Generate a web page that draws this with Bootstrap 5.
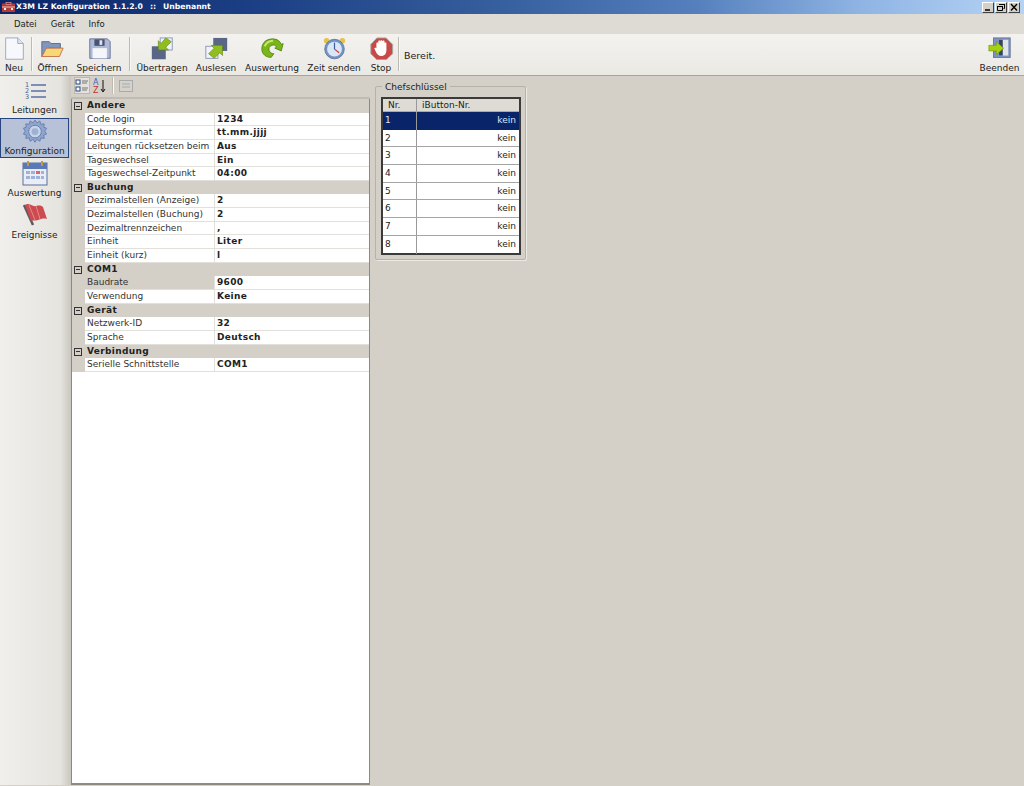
<!DOCTYPE html>
<html lang="de"><head><meta charset="utf-8"><title>X3M LZ Konfiguration</title>
<link href="https://cdn.jsdelivr.net/npm/bootstrap@5.3.0/dist/css/bootstrap.min.css" rel="stylesheet">
<style>
html,body{height:100%;overflow:hidden}
body{width:1024px;height:786px;background:#d4d0c8;font:9px/1.2 "DejaVu Sans",sans-serif;color:#222}
.titlebar{height:14px;flex:none;background:linear-gradient(90deg,#0b2566 0,#1c3f85 25%,#38619f 50%,#5580bd 68%,#8fb4e4 84%,#b6d3f4 100%);color:#fff;font-weight:700;font-size:7.700px;padding-left:2px;gap:1px}
.ttl-sep{margin:0 7px}
.winbtn{width:12px;height:11px;background:#d4d0c8;border:1px solid;border-color:#fff #404040 #404040 #fff;margin-left:1px;color:#000}
.winbtn svg{display:block}
.menubar{height:20px;flex:none;background:#dedbd4;gap:14px;padding:1px 0 0 14px;font-size:8.500px}
.tbar{height:42px;flex:none;background:linear-gradient(180deg,#f3f2ef,#ebe9e4);border-bottom:1px solid #a8a59e;padding:3px 4px 2px 0}
.tool{height:37px;text-align:center;white-space:nowrap}
.tool svg{display:block;width:25px;height:25px;margin-bottom:3px}
.vsep{width:1px;height:34px;background:#bdbab3;border-right:1px solid #f8f8f6;box-sizing:content-box}
.t-neu{width:28px}.s-a{margin:0 4px 0 3px}.t-oeff{width:31px}.t-spei{width:46px;margin-left:8px}
.s-b{margin:0 5px 0 7px}.t-ueb{width:52px}.t-aus{width:44px;margin-left:6px}.t-ausw{width:54px;margin-left:7px}
.t-zeit{width:54px;margin-left:8px}.t-stop{width:26px;margin-left:7px}.s-c{margin:0 4px 0 4px}
.t-ber{font-size:9.500px;margin-bottom:9px}.t-end{width:41px}
.side{width:71px;background:linear-gradient(90deg,#f0efec,#e6e4df 85%,#c9c6bf);flex:none;padding-top:1px}
.sitem{height:41.500px;text-align:center;border:1px solid transparent;margin:0 2px 0 0;white-space:nowrap}
.sitem svg{display:block;width:26px;height:26px;margin-bottom:2px}
.sitem.first{height:41px}
.sitem.first svg{margin-bottom:1px}
.sitem.on{background:#b7c2d9;border-color:#27447f;height:40px;margin:0 2px 1px 0}
.sitem.third{height:42px}
.body-row{flex:1;min-height:0;padding-bottom:1px}
.propwrap{width:299px;flex:none}
.ptool{height:23px;flex:none;padding:1px 0 0 3px;gap:2px;border-bottom:2px solid #c0bcb4}
.ptbtn{width:16px;height:17px}
.ptbtn.on{background:#e4e2dc;border:1px solid #bcb9b1}
.s-p{height:17px;margin:0 2px 0 2px}
.grid{flex:1;background:#fff;border:1px solid #8d8a84;border-top:0;border-bottom-width:2px}
.hrow,.prow{height:13.650px;line-height:13px;display:flex}
.hrow{background:#d4d0c8;font-weight:700;letter-spacing:.35px}
.tog{width:15px;flex:none;padding:3px 0 0 2px}
.tog i{display:block;width:8px;height:8px;border:1px solid #333;background:linear-gradient(#333,#333) center/4px 1px no-repeat}
.gut{width:13px;flex:none;background:#d4d0c8}
.nm{width:130px;flex:none;padding-left:2px;border-bottom:1px solid #e2e0da;border-right:1px solid #e2e0da;white-space:nowrap;overflow:hidden;color:#333}
.vl{flex:1;padding-left:2px;font-weight:700;letter-spacing:.35px;border-bottom:1px solid #e2e0da}
.nm.sel{background:#d4d0c8}
.right{flex:1;padding:10px 0 0 5px}
.gbox{width:151px;height:174px;border:1px solid #b5b2ab;border-radius:2px;position:relative;padding:10px 4px 0 5px;box-shadow:1px 1px 0 #eceae5}
.gbox>span{position:absolute;left:6px;top:-5px;background:#d4d0c8;padding:0 3px;font-size:9px}
.ktab{border:2px solid #3a3a3a;background:#fff;width:140px;height:158px}
.khead{height:13px;background:#dedbd4;display:flex;line-height:13px;border-bottom:1px solid #aaa}
.kc1{width:34px;flex:none;padding-left:5px;border-right:1px solid #999}
.kc2{flex:1;padding-left:5px}
.krow{height:17.700px;display:flex;line-height:17px;border-bottom:1px solid #a5a5a5}
.krow:last-child{border-bottom:0}
.krow .kc1{padding-left:2px}
.krow .kc2{text-align:right;padding-right:3px}
.krow.cur{background:#0a246a;color:#dfe6f5;border-bottom:0}
</style></head><body class="d-flex flex-column">
<div class="titlebar d-flex align-items-center">
<svg width="13" height="10" viewBox="0 0 13 10"><rect y="1.500" width="13" height="8.500" fill="#b23a3a"/><rect x="4" y=".5" width="5" height="2" fill="none" stroke="#d88" stroke-width=".8"/><path d="M0 5h13" stroke="#f3c0b0"/><rect x="2" y="6" width="2" height="2" fill="#eee"/><rect x="9" y="6" width="2" height="2" fill="#eee"/></svg>
<span>X3M LZ Konfiguration 1.1.2.0<span class="ttl-sep">::</span>Unbenannt</span>
<div class="ms-auto d-flex pe-1">
<div class="winbtn"><svg viewBox="0 0 10 9" width="10" height="9"><path d="M2 7h5" stroke="#000" stroke-width="1.500"/></svg></div>
<div class="winbtn"><svg viewBox="0 0 10 9" width="10" height="9"><path d="M3.500 1.500h5v4h-1M1.500 3.500h5v4h-5z" fill="none" stroke="#000"/><path d="M3 1.500h6M1 3.500h6" stroke="#000"/></svg></div>
<div class="winbtn"><svg viewBox="0 0 10 9" width="10" height="9"><path d="M2 1l6 6.500M8 1L2 7.500" stroke="#000" stroke-width="1.400"/></svg></div>
</div></div>
<div class="menubar d-flex align-items-center"><span>Datei</span><span>Gerät</span><span>Info</span></div>
<div class="tbar d-flex">
<div class="tool t-neu d-flex flex-column align-items-center"><svg viewBox="0 0 25 25"><path d="M3 1h13l6 6v17H3z" fill="#f7f8fb" stroke="#9aa4c2"/><path d="M16 1v6h6" fill="#dfe4ee" stroke="#9aa4c2"/></svg>Neu</div>
<div class="vsep s-a"></div>
<div class="tool t-oeff d-flex flex-column align-items-center"><svg viewBox="0 0 25 25"><path d="M1 21V5h8l2 2h10v5H8z" fill="#7f97bd" stroke="#5a6d90"/><path d="M1 21l5-9h18l-4 9z" fill="#f6d975" stroke="#c8704a"/></svg>Öffnen</div>
<div class="tool t-spei d-flex flex-column align-items-center"><svg viewBox="0 0 25 25"><path d="M2 2h19l3 3v18H2z" fill="#aeb9d8" stroke="#6a7498"/><rect x="7" y="2.500" width="11" height="7" fill="#4a5370"/><rect x="12.500" y="3.500" width="3" height="5" fill="#dfe3ee"/><rect x="5" y="12" width="15.500" height="11" fill="#f5f6fa"/></svg>Speichern</div>
<div class="vsep s-b"></div>
<div class="tool t-ueb d-flex flex-column align-items-center"><svg viewBox="0 0 25 25"><rect x="10" y="1" width="13" height="13" fill="#f0f2f7" stroke="#8b96b8"/><rect x="1" y="10" width="15" height="14" fill="#5a6686"/><path d="M22 5l-6 6 3 3H8V4l3 3 5-6z" fill="#8fbe1e" stroke="#587c0c" stroke-width=".6"/></svg>Übertragen</div>
<div class="tool t-aus d-flex flex-column align-items-center"><svg viewBox="0 0 25 25"><rect x="9" y="1" width="15" height="14" fill="#5a6686"/><rect x="1" y="10" width="13" height="13" fill="#f0f2f7" stroke="#8b96b8"/><path d="M4 20l6-6-3-3h12v11l-3-3-6 6z" fill="#8fbe1e" stroke="#587c0c" stroke-width=".6" transform="translate(0 -2)"/></svg>Auslesen</div>
<div class="tool t-ausw d-flex flex-column align-items-center"><svg viewBox="0 0 25 25"><path d="M1 13C1 5 7 2 13 2c5 0 8 3 9 6l2-1-2 8-7-3 2-1c-1-2-3-3-5-2-3 1-4 3-3 6 1 2 3 3 5 3l-3 4C6 22 1 19 1 13z" fill="#7cb518" stroke="#3f7a10" stroke-width=".8"/><path d="M4 10c2-4 5-6 9-6" stroke="#cbe878" stroke-width="2" fill="none"/></svg>Auswertung</div>
<div class="tool t-zeit d-flex flex-column align-items-center"><svg viewBox="0 0 25 25"><circle cx="4" cy="4" r="3" fill="#e6c24a"/><circle cx="21" cy="4" r="3" fill="#e6c24a"/><circle cx="12.500" cy="13" r="10.500" fill="#6f95c8" stroke="#6a7498"/><circle cx="12.500" cy="13" r="8" fill="#d9e6f6"/><path d="M12.500 6v7" stroke="#3d5f9a" stroke-width="1.300" fill="none"/><path d="M12.500 13l5 4" stroke="#c33" stroke-width="1.200" fill="none"/></svg>Zeit senden</div>
<div class="tool t-stop d-flex flex-column align-items-center"><svg viewBox="0 0 25 25"><path d="M7.500 1h10l7 7v10l-7 6.500h-10L1 18V8z" fill="#c84a46" stroke="#a8a8a8"/><path d="M7 12V7c0-1.500 2-1.500 2 0V5c0-1.500 2.200-1.500 2.200 0v-.5c0-1.500 2.300-1.500 2.300 0V5c0-1.500 2.300-1.500 2.300 0v2c0-1.300 2-1.300 2 0v7c0 4-2 6.500-5.500 6.500-3 0-4.500-2-6-5L5 13c-.7-1.300 1-2 2-1z" fill="#fff"/></svg>Stop</div>
<div class="vsep s-c"></div>
<div class="tool t-ber d-flex align-items-center">Bereit.</div>
<div class="tool t-end d-flex flex-column align-items-center ms-auto"><svg viewBox="0 0 25 25"><rect x="6" y="1" width="18" height="21" fill="#7d93c4" stroke="#6a7498"/><rect x="12" y="3" width="10" height="17" fill="#dfe3ea"/><rect x="12" y="3" width="4" height="17" fill="#37435f"/><path d="M1 9h8V5l8 7-8 7v-4H1z" fill="#a6d012" stroke="#6b8f10" stroke-width=".6"/></svg>Beenden</div>
</div>
<div class="body-row d-flex">
<div class="side">
<div class="sitem first d-flex flex-column align-items-center"><svg viewBox="0 0 26 26"><g fill="none" stroke="#5c70a8" stroke-width="1.400"><path d="M9 7h15M9 13h15M9 19h15"/></g><text x="3" y="9" font-size="6.500" font-family="DejaVu Sans" fill="#4a5a8a">1</text><text x="3" y="15" font-size="6.500" font-family="DejaVu Sans" fill="#4a5a8a">2</text><text x="3" y="21" font-size="6.500" font-family="DejaVu Sans" fill="#4a5a8a">3</text></svg>Leitungen</div>
<div class="sitem on d-flex flex-column align-items-center"><svg viewBox="0 0 26 26"><path d="M13 1l2 3 3-2 1 3.500 3.500-.5-.5 3.500 3 1-2 3 2 3-3 1 .5 3.500-3.500-.5-1 3.500-3-2-2 3-2-3-3 2-1-3.500-3.500.5.500-3.500-3-1 2-3-2-3 3-1-.5-3.500 3.500.5 1-3.500 3 2z" fill="#8ea5cf" stroke="#6a80ad"/><circle cx="13" cy="13" r="6.500" fill="#c7d3e6" stroke="#6a80ad"/><circle cx="13" cy="13" r="3.500" fill="#9db1d4"/></svg>Konfiguration</div>
<div class="sitem third d-flex flex-column align-items-center"><svg viewBox="0 0 26 26"><rect x="1" y="3" width="24" height="22" fill="#e9edf5" stroke="#5a6f9f"/><rect x="1" y="3" width="24" height="6" fill="#5b78b8"/><path d="M6 1v5M20 1v5" stroke="#c69a3a" stroke-width="2"/><g fill="#9fb2d8"><rect x="4" y="11" width="4" height="3"/><rect x="9" y="11" width="4" height="3"/><rect x="14" y="11" width="4" height="3" fill="#d66"/><rect x="19" y="11" width="3" height="3"/><rect x="4" y="16" width="4" height="3"/><rect x="9" y="16" width="4" height="3"/><rect x="14" y="16" width="4" height="3"/><rect x="19" y="16" width="3" height="3"/></g></svg>Auswertung</div>
<div class="sitem d-flex flex-column align-items-center"><svg viewBox="0 0 26 26"><path d="M2 3l9 20" stroke="#5c5a60" stroke-width="2.500"/><path d="M3 3c4-3 7 2 11 1s6 0 7 1l4 12c-3-1-6 0-9 1s-5 0-7 1z" fill="#cc4a50"/><path d="M7 3l6 15M14 4l4 13" stroke="#e58a88"/></svg>Ereignisse</div>
</div>
<div class="propwrap d-flex flex-column">
<div class="ptool d-flex">
<div class="ptbtn on d-flex align-items-center justify-content-center"><svg width="14" height="14" viewBox="0 0 14 14"><rect x="1" y="1" width="4" height="4" fill="#fff" stroke="#27447f"/><rect x="1" y="8" width="4" height="4" fill="#fff" stroke="#27447f"/><path d="M7 2h6M7 4h5M7 9h6M7 11h5" stroke="#777"/></svg></div>
<div class="ptbtn d-flex align-items-center justify-content-center"><svg width="14" height="16" viewBox="0 0 14 16"><text x="0" y="7" font-size="8" font-family="DejaVu Sans" fill="#3a62b8">A</text><text x="0" y="15" font-size="8" font-family="DejaVu Sans" fill="#c03030">Z</text><path d="M10 2v11M8 11l2 3 2-3" stroke="#111" fill="none"/></svg></div>
<div class="vsep s-p"></div>
<div class="ptbtn d-flex align-items-center justify-content-center"><svg width="14" height="14" viewBox="0 0 14 14"><rect x=".5" y="1.500" width="13" height="11" fill="#d4d2cc" stroke="#aaa"/><path d="M3 5h8M3 8h8" stroke="#aaa"/></svg></div>
</div>
<div class="grid">
<div class="hrow"><div class="tog"><i></i></div>Andere</div>
<div class="prow"><div class="gut"></div><div class="nm">Code login</div><div class="vl">1234</div></div>
<div class="prow"><div class="gut"></div><div class="nm">Datumsformat</div><div class="vl">tt.mm.jjjj</div></div>
<div class="prow"><div class="gut"></div><div class="nm">Leitungen rücksetzen beim</div><div class="vl">Aus</div></div>
<div class="prow"><div class="gut"></div><div class="nm">Tageswechsel</div><div class="vl">Ein</div></div>
<div class="prow"><div class="gut"></div><div class="nm">Tageswechsel-Zeitpunkt</div><div class="vl">04:00</div></div>
<div class="hrow"><div class="tog"><i></i></div>Buchung</div>
<div class="prow"><div class="gut"></div><div class="nm">Dezimalstellen (Anzeige)</div><div class="vl">2</div></div>
<div class="prow"><div class="gut"></div><div class="nm">Dezimalstellen (Buchung)</div><div class="vl">2</div></div>
<div class="prow"><div class="gut"></div><div class="nm">Dezimaltrennzeichen</div><div class="vl">,</div></div>
<div class="prow"><div class="gut"></div><div class="nm">Einheit</div><div class="vl">Liter</div></div>
<div class="prow"><div class="gut"></div><div class="nm">Einheit (kurz)</div><div class="vl">l</div></div>
<div class="hrow"><div class="tog"><i></i></div>COM1</div>
<div class="prow"><div class="gut"></div><div class="nm sel">Baudrate</div><div class="vl">9600</div></div>
<div class="prow"><div class="gut"></div><div class="nm">Verwendung</div><div class="vl">Keine</div></div>
<div class="hrow"><div class="tog"><i></i></div>Gerät</div>
<div class="prow"><div class="gut"></div><div class="nm">Netzwerk-ID</div><div class="vl">32</div></div>
<div class="prow"><div class="gut"></div><div class="nm">Sprache</div><div class="vl">Deutsch</div></div>
<div class="hrow"><div class="tog"><i></i></div>Verbindung</div>
<div class="prow"><div class="gut"></div><div class="nm">Serielle Schnittstelle</div><div class="vl">COM1</div></div>
</div></div>
<div class="right"><div class="gbox"><span>Chefschlüssel</span><div class="ktab">
<div class="khead"><div class="kc1">Nr.</div><div class="kc2">iButton-Nr.</div></div>
<div class="krow cur"><div class="kc1">1</div><div class="kc2">kein</div></div>
<div class="krow"><div class="kc1">2</div><div class="kc2">kein</div></div>
<div class="krow"><div class="kc1">3</div><div class="kc2">kein</div></div>
<div class="krow"><div class="kc1">4</div><div class="kc2">kein</div></div>
<div class="krow"><div class="kc1">5</div><div class="kc2">kein</div></div>
<div class="krow"><div class="kc1">6</div><div class="kc2">kein</div></div>
<div class="krow"><div class="kc1">7</div><div class="kc2">kein</div></div>
<div class="krow"><div class="kc1">8</div><div class="kc2">kein</div></div>
</div></div></div>
</div>
</body></html>
